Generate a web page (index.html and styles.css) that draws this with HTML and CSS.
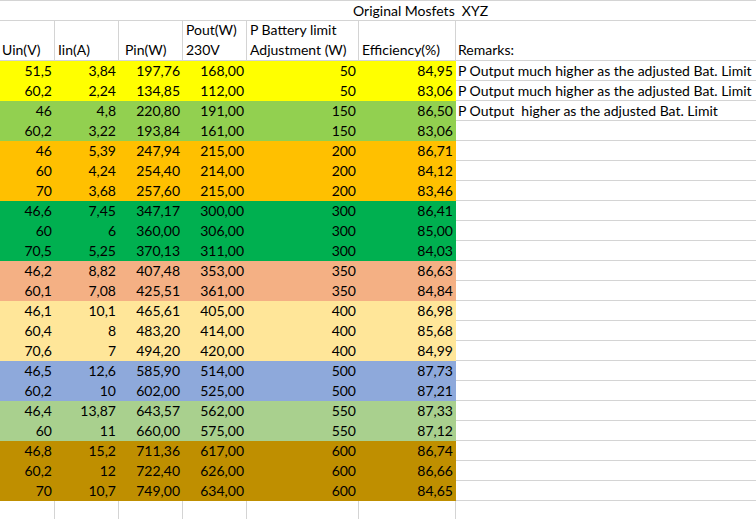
FILE: index.html
```html
<!DOCTYPE html>
<html lang="en">
<head>
<meta charset="utf-8">
<title>Original Mosfets XYZ</title>
<link rel="stylesheet" href="styles.css">
</head>
<body>
<div class="sheet">
  <div class="title">Original Mosfets  XYZ</div>

  <div class="row head">
    <div class="c">Uin(V)</div>
    <div class="c">Iin(A)</div>
    <div class="c pin">Pin(W)</div>
    <div class="c">Pout(W)<br>230V</div>
    <div class="c">P Battery limit<br>Adjustment (W)</div>
    <div class="c">Efficiency(%)</div>
    <div class="c rem">Remarks:</div>
  </div>

  <div class="row yellow"><div class="c n">51,5</div><div class="c n">3,84</div><div class="c n">197,76</div><div class="c n">168,00</div><div class="c n">50</div><div class="c n">84,95</div><div class="c rem">P Output much higher as the adjusted Bat. Limit</div></div>
  <div class="row yellow"><div class="c n">60,2</div><div class="c n">2,24</div><div class="c n">134,85</div><div class="c n">112,00</div><div class="c n">50</div><div class="c n">83,06</div><div class="c rem">P Output much higher as the adjusted Bat. Limit</div></div>
  <div class="row green"><div class="c n">46</div><div class="c n">4,8</div><div class="c n">220,80</div><div class="c n">191,00</div><div class="c n">150</div><div class="c n">86,50</div><div class="c rem">P Output  higher as the adjusted Bat. Limit</div></div>
  <div class="row green"><div class="c n">60,2</div><div class="c n">3,22</div><div class="c n">193,84</div><div class="c n">161,00</div><div class="c n">150</div><div class="c n">83,06</div><div class="c rem"></div></div>
  <div class="row orange"><div class="c n">46</div><div class="c n">5,39</div><div class="c n">247,94</div><div class="c n">215,00</div><div class="c n">200</div><div class="c n">86,71</div><div class="c rem"></div></div>
  <div class="row orange"><div class="c n">60</div><div class="c n">4,24</div><div class="c n">254,40</div><div class="c n">214,00</div><div class="c n">200</div><div class="c n">84,12</div><div class="c rem"></div></div>
  <div class="row orange"><div class="c n">70</div><div class="c n">3,68</div><div class="c n">257,60</div><div class="c n">215,00</div><div class="c n">200</div><div class="c n">83,46</div><div class="c rem"></div></div>
  <div class="row dgreen"><div class="c n">46,6</div><div class="c n">7,45</div><div class="c n">347,17</div><div class="c n">300,00</div><div class="c n">300</div><div class="c n">86,41</div><div class="c rem"></div></div>
  <div class="row dgreen"><div class="c n">60</div><div class="c n">6</div><div class="c n">360,00</div><div class="c n">306,00</div><div class="c n">300</div><div class="c n">85,00</div><div class="c rem"></div></div>
  <div class="row dgreen"><div class="c n">70,5</div><div class="c n">5,25</div><div class="c n">370,13</div><div class="c n">311,00</div><div class="c n">300</div><div class="c n">84,03</div><div class="c rem"></div></div>
  <div class="row salmon"><div class="c n">46,2</div><div class="c n">8,82</div><div class="c n">407,48</div><div class="c n">353,00</div><div class="c n">350</div><div class="c n">86,63</div><div class="c rem"></div></div>
  <div class="row salmon"><div class="c n">60,1</div><div class="c n">7,08</div><div class="c n">425,51</div><div class="c n">361,00</div><div class="c n">350</div><div class="c n">84,84</div><div class="c rem"></div></div>
  <div class="row lyellow"><div class="c n">46,1</div><div class="c n">10,1</div><div class="c n">465,61</div><div class="c n">405,00</div><div class="c n">400</div><div class="c n">86,98</div><div class="c rem"></div></div>
  <div class="row lyellow"><div class="c n">60,4</div><div class="c n">8</div><div class="c n">483,20</div><div class="c n">414,00</div><div class="c n">400</div><div class="c n">85,68</div><div class="c rem"></div></div>
  <div class="row lyellow"><div class="c n">70,6</div><div class="c n">7</div><div class="c n">494,20</div><div class="c n">420,00</div><div class="c n">400</div><div class="c n">84,99</div><div class="c rem"></div></div>
  <div class="row blue"><div class="c n">46,5</div><div class="c n">12,6</div><div class="c n">585,90</div><div class="c n">514,00</div><div class="c n">500</div><div class="c n">87,73</div><div class="c rem"></div></div>
  <div class="row blue"><div class="c n">60,2</div><div class="c n">10</div><div class="c n">602,00</div><div class="c n">525,00</div><div class="c n">500</div><div class="c n">87,21</div><div class="c rem"></div></div>
  <div class="row lgreen"><div class="c n">46,4</div><div class="c n">13,87</div><div class="c n">643,57</div><div class="c n">562,00</div><div class="c n">550</div><div class="c n">87,33</div><div class="c rem"></div></div>
  <div class="row lgreen"><div class="c n">60</div><div class="c n">11</div><div class="c n">660,00</div><div class="c n">575,00</div><div class="c n">550</div><div class="c n">87,12</div><div class="c rem"></div></div>
  <div class="row brown"><div class="c n">46,8</div><div class="c n">15,2</div><div class="c n">711,36</div><div class="c n">617,00</div><div class="c n">600</div><div class="c n">86,74</div><div class="c rem"></div></div>
  <div class="row brown"><div class="c n">60,2</div><div class="c n">12</div><div class="c n">722,40</div><div class="c n">626,00</div><div class="c n">600</div><div class="c n">86,66</div><div class="c rem"></div></div>
  <div class="row brown"><div class="c n">70</div><div class="c n">10,7</div><div class="c n">749,00</div><div class="c n">634,00</div><div class="c n">600</div><div class="c n">84,65</div><div class="c rem"></div></div>

  <div class="row blank"><div class="c"></div><div class="c"></div><div class="c"></div><div class="c"></div><div class="c"></div><div class="c"></div><div class="c rem"></div></div>
</div>
</body>
</html>
```
FILE: styles.css
```css
html, body {
  margin: 0;
  padding: 0;
  background: #ffffff;
}

body {
  width: 756px;
  height: 519px;
  overflow: hidden;
  font-family: "Lato", "Open Sans", sans-serif;
  font-size: 14px;
  color: #000000;
}

.sheet {
  display: grid;
  grid-template-columns: 55px 64px 64px 64px 112px 97px 1fr;
  grid-template-rows: 20px 40px;
  grid-auto-rows: 20px;
  border-top: 1px solid #d4d4d4;
  width: 756px;
}

.title {
  grid-column: 1 / -1;
  border-bottom: 1px solid #d4d4d4;
  padding-left: 353px;
  line-height: 19px;
  white-space: pre;
}

.row {
  display: contents;
}

.c {
  box-sizing: border-box;
  border-bottom: 1px solid #d4d4d4;
  border-right: 1px solid #d4d4d4;
  padding: 0 2px 0 3px;
  line-height: 19px;
  white-space: nowrap;
  min-width: 0;
}

.head .c {
  display: flex;
  align-items: flex-end;
  line-height: 20px;
}

.head .c:first-child {
  padding-left: 2px;
}

.head .pin {
  padding-left: 6px;
}

.c.n {
  text-align: right;
  padding-right: 2px;
}

.c.rem {
  padding-left: 2px;
  border-right: none;
  white-space: pre;
}

.yellow > .c:not(.rem)  { background: #ffff00; border-color: transparent; }
.green > .c:not(.rem)   { background: #92d050; border-color: transparent; }
.orange > .c:not(.rem)  { background: #ffc000; border-color: transparent; }
.dgreen > .c:not(.rem)  { background: #00b050; border-color: transparent; }
.salmon > .c:not(.rem)  { background: #f4b084; border-color: transparent; }
.lyellow > .c:not(.rem) { background: #ffe699; border-color: transparent; }
.blue > .c:not(.rem)    { background: #8ea9db; border-color: transparent; }
.lgreen > .c:not(.rem)  { background: #a9d08e; border-color: transparent; }
.brown > .c:not(.rem)   { background: #bf8f00; border-color: transparent; }
```
